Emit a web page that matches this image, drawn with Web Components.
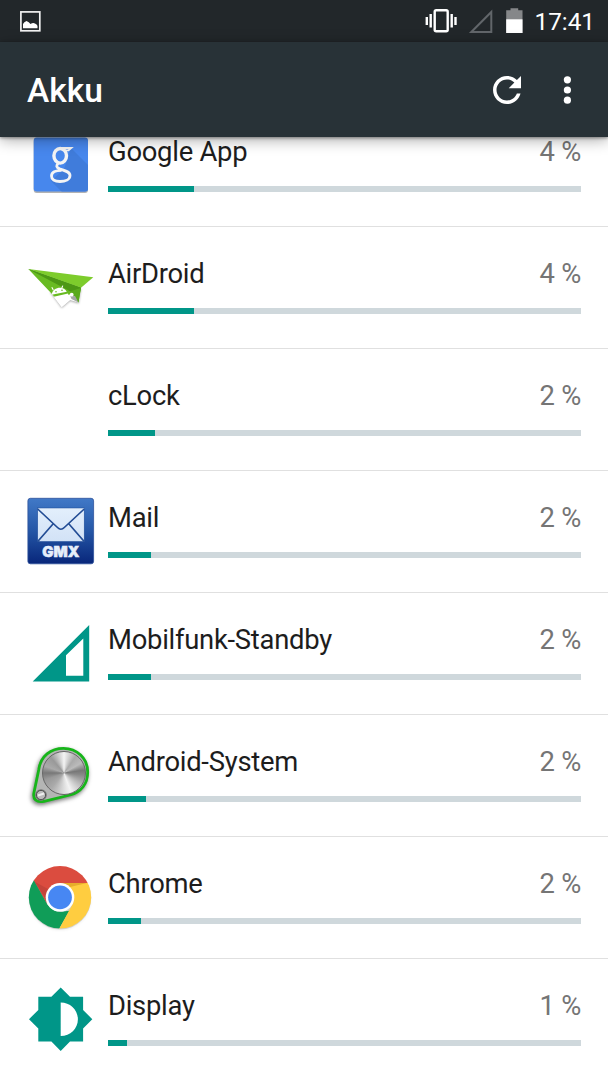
<!DOCTYPE html>
<html lang="de">
<head>
<meta charset="utf-8">
<title>Akku</title>
<style>
html,body{margin:0;height:100%;overflow:hidden;background:#fff}
body{font-family:Roboto,"Noto Sans",sans-serif}
</style>
</head>
<body>
<battery-screen></battery-screen>
<script>
const define = (name, render) => customElements.define(name, class extends HTMLElement {
  connectedCallback() {
    if (this.shadowRoot) return;
    this.attachShadow({mode: 'open'}).innerHTML = render(key => this.getAttribute(key));
  }
});

const icons = {
google: `<defs><clipPath id="c"><rect x="9.7" y="8.6" width="54.3" height="54" rx="3"/></clipPath></defs>
 <rect x="9.7" y="9.9" width="54.3" height="54" rx="3" fill="#999" opacity=".75"/>
 <rect x="9.7" y="8.6" width="54.3" height="54" rx="3" fill="#4787ed"/>
 <path clip-path="url(#c)" d="M47 19L66 38V66H41L27 52 40 40Z" fill="#407cdb"/>
 <g fill="none" stroke="#f4f4f4">
 <ellipse cx="36.2" cy="26.8" rx="6.3" ry="7.3" stroke-width="3.4"/>
 <path d="M37 19H47.3L44.5 21.3H40" stroke-width="1.8"/>
 <path d="M35 33.5C31.5 36.5 32.3 38.2 35.5 39.8C40.5 41.5 46 42.5 46 46.500C46 50.5 41.3 52.5 36 52.5C30.5 52.5 27.500 50.300 27.500 47C27.500 43.500 31.500 41.300 37.500 41.300" stroke-width="2.8"/></g>`,
airdroid: `<path d="M26 40L37.700 56L46 49 54.700 51.500 57 36.700Z" fill="#fff" style="filter:drop-shadow(0 1.5px 1px #0005)"/>
 <path d="M4.3 18L27.500 42.500 31 46.500 46 43.500 54.500 51.500 57 36.700Z" fill="#68bb22"/>
 <path d="M4.3 18L69.3 26.3 57 36.700Z" fill="#7dcc2c"/>
 <path d="M4.3 18L57 36.700 55.500 43.500Z" fill="#4c9815"/>
 <path d="M57 36.700L54.500 51.500 47 42 46 40Z" fill="#59aa1c"/>
 <path d="M4.3 18L57 36.700 46 40.200Z" fill="#4c9815"/>
 <path d="M27.600 43.800C28.500 36 39.500 34 42.800 40.800Z" fill="#fff"/>
 <path d="M29.300 39L27.800 36.300M37.800 37L38.800 34.600" stroke="#fff" stroke-width="1.100"/>
 <circle cx="32" cy="40.700" r=".8" fill="#67b923"/><circle cx="38" cy="39.200" r=".8" fill="#67b923"/>
 <path d="M29.800 45.700L44 42.400 46 49 37.700 56Z" fill="#fff"/>
 <path d="M46 44.500L51 45 54.500 51.500 47.500 48Z" fill="#a4a8a4"/><circle cx="47.700" cy="43.700" r="1.900" fill="#fff"/>`,
clock: ``,
mail: `<defs><linearGradient id="m" x2="0" y2="1"><stop stop-color="#4179c7"/><stop offset=".5" stop-color="#2456a6"/><stop offset="1" stop-color="#08267a"/></linearGradient><linearGradient id="e" x2="0" y2="1"><stop stop-color="#e3effc"/><stop offset="1" stop-color="#d2e2f6"/></linearGradient></defs>
 <rect x="3.9" y="3.300" width="65.7" height="65.5" rx="2.5" fill="url(#m)" stroke="#2d519b" stroke-width=".8"/>
 <rect x="13.7" y="13" width="46.5" height="33.5" fill="url(#e)" stroke="#1b4995" stroke-width=".5"/>
 <path d="M13.7 14L33.5 32.5Q36.9 36 40.3 32.5L60.2 14M13.7 46.5L29 29M60.2 46.5L45 29" fill="none" stroke="#234d95" stroke-width="1.7"/>
 <text x="18.3" y="61.7" textLength="37" lengthAdjust="spacingAndGlyphs" font-family="Inter,Roboto,sans-serif" font-size="14.5" font-weight="900" fill="#e6eefa" stroke="#e6eefa" stroke-width=".5">GMX</text>`,
mobile: `<path fill-rule="evenodd" d="M8.7 64.5L65.2 8V64.5ZM42 38.3V58.7H59.3V21.5Z" fill="#009688"/>`,
android: `<path d="M14.7 31C16.500 17 27 9.300 39.500 9.300C53 9.300 63.700 19.500 63.700 33C63.700 45 57 53 46 56L20 62.300C12.500 64 8.600 60 10 53.500Z" fill="#b4b5b4" stroke="#17b51a" stroke-width="2.8" style="filter:drop-shadow(-1px 2px 2px #0008)"/>
 <foreignObject x="17.500" y="11.500" width="46" height="46"><div xmlns="http://www.w3.org/1999/xhtml" style="width:44px;height:44px;border-radius:50%;box-sizing:border-box;border:1.5px solid #666;background:conic-gradient(#f4f4f4,#aaa 35deg,#bbb 60deg,#777 82deg,#888 96deg,#bbb 125deg,#f3f3f3 160deg,#ddd 180deg,#aaa 220deg,#999 250deg,#777 270deg,#aaa 290deg,#999 320deg,#f4f4f4)"></div></foreignObject>
 <circle cx="17" cy="56" r="5.800" fill="#777"/><circle cx="17" cy="56" r="4.600" fill="#bbb" stroke="#555"/><path d="M14 56.500L20 54.500" stroke="#eee" stroke-width="2"/>`,
chrome: `<defs><clipPath id="r"><circle cx="36" cy="36.3" r="31.2"/></clipPath></defs>
 <circle cx="36" cy="37.3" r="31.2" fill="#0002" style="filter:drop-shadow(0 1px 1px #0006)"/>
 <g clip-path="url(#r)"><path d="M0 0H72V22H36L23 43 5 12Z" fill="#db4c3f"/>
 <path d="M10.7 20.7L23.4 43.5Q29 51 37 50.7L45.5 49.7 35 68 0 72V5Z" fill="#109d58"/>
 <path d="M36 22H72V72H33L48.4 43.5Q53 31 36 22Z" fill="#ffcd40"/>
 <path d="M36 22H63L46 26Z" fill="#e7ad2b"/><path d="M10.7 20.7L24 28 23 40Z" fill="#c5443a"/></g>
 <circle cx="36" cy="36.3" r="14.3" fill="#fff"/><circle cx="36" cy="36.3" r="11.9" fill="#4787f3"/>`,
display: `<path d="M36.7 4.5L46 13.7H59.1V26.9L68.3 36.2 59.1 45.5V58.6H46L36.7 67.9 27.4 58.6H14.3V45.5L5 36.2 14.3 26.9V13.7H27.4ZM36.7 19.4V53C46.3 53 53.9 45.6 53.9 36.2S46.3 19.4 36.7 19.4Z" fill="#009688" fill-rule="evenodd"/>`
};

define('app-icon', attr => `<style>:host{display:block;width:72px;height:72px}svg{display:block}</style><svg width="72" height="72" viewBox="0 0 72 72">${icons[attr('name')]}</svg>`);

define('usage-bar', attr => `<style>:host{display:block;height:6px;background:#cfd8dc}div{height:100%;background:#009688;width:${attr('used')}px}</style><div></div>`);

define('battery-item', attr => `<style>
 :host{display:grid;grid-template-columns:72px 473px;column-gap:12px;box-sizing:border-box;height:122px;padding:24px 0 0 24px;border-bottom:1px solid #e0e0e0}
 .line{display:flex;justify-content:space-between;height:56.5px;padding-top:10px;box-sizing:border-box;font-size:27.4px;letter-spacing:-.26px;line-height:27px;color:#1d1d1d;white-space:pre}
 .percent{color:#757575}
 </style><app-icon name="${attr('icon')}"></app-icon><div><div class="line"><slot></slot><span class="percent">${attr('percent')} %</span></div><usage-bar used="${attr('used')}"></usage-bar></div>`);

define('status-bar', () => `<style>
 :host{display:flex;align-items:flex-start;height:42px;background:#22272a;color:#fff}
 svg{display:block}.left{flex:1}
 span{font-size:24.3px;line-height:28px;padding-top:8px;width:73.5px}
 </style>
 <div class="left"><svg width="60" height="42"><rect x="20.9" y="11.9" width="18.9" height="18.9" fill="none" stroke="#f2f2f2" stroke-width="1.7"/><path d="M23 28.3V24Q24 22 26.5 21Q29 22 30.5 24Q33 22.5 35 23.5Q37.5 24.5 37.5 26V28.3Z" fill="#fff"/></svg></div>
 <svg width="109.5" height="42" viewBox="425.5 0 109.5 42"><rect x="435.2" y="10.2" width="13" height="21" rx="1.5" fill="none" stroke="#fff" stroke-width="2.4"/><path d="M431.2 14V27.5M427.3 17V25M452.2 14V27.5M456 17V25" stroke="#fff" stroke-width="2.4"/>
 <path d="M471.8 32L491.8 12V32Z" fill="none" stroke="#62666a" stroke-width="2"/>
 <path d="M511 8.3H518.7V10.3H523V33H506.7V10.3H511Z" fill="#858789"/><path d="M506.7 19.3H523V33H506.7Z" fill="#fff"/></svg>
 <span>17:41</span>`);

define('app-bar', () => `<style>
 :host{display:flex;align-items:center;position:relative;z-index:1;height:95px;box-sizing:border-box;background:#283237;color:#fff;padding:0 20px 0 27px;box-shadow:0 1px 3px #0006,0 3px 14px #0005}
 h1{flex:1;margin:0;padding-top:2px;font-size:33.5px;line-height:40px;font-weight:500}
 svg{display:block;fill:#fff}.more{margin-left:18.5px}
 </style><h1><slot></slot></h1>
 <svg width="42" height="42" viewBox="0 0 24 24"><path d="M17.65 6.35C16.2 4.9 14.21 4 12 4c-4.42 0-7.99 3.58-7.99 8s3.57 8 7.99 8c3.73 0 6.84-2.55 7.73-6h-2.08c-.82 2.33-3.04 4-5.65 4-3.31 0-6-2.69-6-6s2.69-6 6-6c1.66 0 3.14.69 4.22 1.78L13 11h7V4l-2.35 2.35z"/></svg>
 <svg class="more" width="42" height="42" viewBox="0 0 42 42"><circle cx="21.4" cy="10.8" r="3.6"/><circle cx="21.4" cy="21" r="3.6"/><circle cx="21.4" cy="31.2" r="3.6"/></svg>`);

define('battery-screen', () => `<style>
 :host{display:flex;flex-direction:column;width:608px;height:1080px;overflow:hidden;background:#fff}
 main{flex:1;min-height:0;overflow:hidden}.list{margin-top:-32px}
 </style><status-bar></status-bar><app-bar>Akku</app-bar><main><div class="list">
 <battery-item icon="google" percent="4" used="86">Google App</battery-item>
 <battery-item icon="airdroid" percent="4" used="86">AirDroid</battery-item>
 <battery-item icon="clock" percent="2" used="47.4">cLock</battery-item>
 <battery-item icon="mail" percent="2" used="43">Mail</battery-item>
 <battery-item icon="mobile" percent="2" used="43">Mobilfunk-Standby</battery-item>
 <battery-item icon="android" percent="2" used="38.4">Android-System</battery-item>
 <battery-item icon="chrome" percent="2" used="33.3">Chrome</battery-item>
 <battery-item icon="display" percent="1" used="19.3">Display</battery-item>
 </div></main>`);
</script>
</body>
</html>
